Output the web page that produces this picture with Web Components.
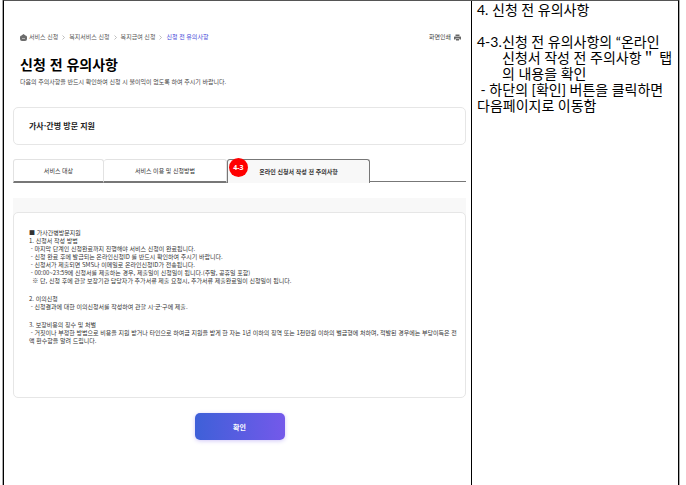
<!DOCTYPE html>
<html lang="ko">
<head>
<meta charset="utf-8">
<meta name="viewport" content="width=device-width, initial-scale=1">
<title>신청 전 유의사항</title>
<style>
  body { margin: 0; background: #fff; color: #111; font-family: "Noto Sans CJK KR", sans-serif; }
</style>
</head>
<body>
<guide-sheet>
  <service-page>
    <page-header heading="신청 전 유의사항" note="다음의 주의사항을 반드시 확인하여 신청 시 불이익이 없도록 하여 주시기 바랍니다."></page-header>
    <service-card>가사·간병 방문 지원</service-card>
    <service-tabs></service-tabs>
    <notice-panel>
      <notice-group>
        <p>■ 가사간병방문지원</p>
        <p>1. 신청서 작성 방법</p>
        <p>&nbsp;- 마지막 단계인 신청완료까지 진행해야 서비스 신청이 완료됩니다.</p>
        <p>&nbsp;- 신청 완료 후에 발급되는 온라인신청ID 를 반드시 확인하여 주시기 바랍니다.</p>
        <p>&nbsp;- 신청서가 제출되면 SMS나 이메일로 온라인신청ID가 전송됩니다.</p>
        <p>&nbsp;- 00:00~23:59에 신청서를 제출하는 경우, 제출일이 신청일이 됩니다.(주말, 공휴일 포함)</p>
        <p>&nbsp;&nbsp;※ 단, 신청 후에 관할 보장기관 담당자가 추가서류 제출 요청시, 추가서류 제출완료일이 신청일이 됩니다.</p>
      </notice-group>
      <notice-group>
        <p>2. 이의신청</p>
        <p>&nbsp;- 신청결과에 대한 이의신청서를 작성하여 관할 시·군·구에 제출.</p>
      </notice-group>
      <notice-group>
        <p>3. 보장비용의 징수 및 처벌</p>
        <p>&nbsp;- 거짓이나 부정한 방법으로 비용을 지원 받거나 타인으로 하여금 지원을 받게 한 자는 1년 이하의 징역 또는 1천만원 이하의 벌금형에 처하며, 적발된 경우에는 부당이득은 전액 환수함을 알려 드립니다.</p>
      </notice-group>
    </notice-panel>
    <confirm-button>확인</confirm-button>
  </service-page>
  <guide-notes slot="notes"></guide-notes>
</guide-sheet>

<script>
const define = (name, html, setup) => customElements.define(name, class extends HTMLElement {
  constructor() {
    super();
    this.attachShadow({ mode: "open" }).innerHTML = html;
  }
  connectedCallback() { if (setup) setup(this, this.shadowRoot); }
});

define("guide-sheet", `
  <style>
    :host { display: grid; grid-template-columns: minmax(0, 468fr) minmax(0, 206fr); box-sizing: border-box;
      min-height: 100vh; margin: 0 7px 0 3px; border: 1px solid #000; border-top-color: #555; border-bottom: 0;
      box-shadow: -1px 0 #aaa, 1px 0 #aaa; }
    main { border-right: 1px solid #000; }
  </style>
  <main><slot></slot></main>
  <aside><slot name="notes"></slot></aside>`);

define("service-page", `
  <style>:host { display: block; padding: 32px 5px 40px 9px; }</style>
  <slot></slot>`);

define("page-header", `
  <style>
    :host { display: block; padding: 0 5px 0 7px; }
    .top { display: flex; justify-content: space-between; align-items: center; height: 8px; font-size: 6px; line-height: 8px; }
    nav, .print { display: flex; align-items: center; }
    nav { gap: 4px; }
    a { color: #555; text-decoration: none; white-space: nowrap; }
    a.home { display: flex; align-items: center; gap: 2px; }
    a.now { color: #3f45d8; }
    .print { gap: 3px; border: 0; padding: 0; background: none; color: #444; font: inherit; }
    h1 { margin: 12px 0 0; font-size: 14px; line-height: 22px; font-weight: 700; color: #000; }
    p { margin: 3px 0 0; font-size: 6px; line-height: 8px; color: #444; }
    svg { display: block; }
  </style>
  <div class="top">
    <nav aria-label="현재 위치">
      <a class="home" href="#"><svg width="7" height="7" viewBox="0 0 14 14" aria-hidden="true"><path d="M7 0 11 3a3 3 0 0 1 3 3v4a4 4 0 0 1-4 4H4a4 4 0 0 1-4-4V6a3 3 0 0 1 3-3z" fill="#6c6c6c"/><path d="M4 9h6" stroke="#ccc" stroke-width="1.5"/></svg>서비스 신청</a>
      <svg width="3" height="5" viewBox="0 0 6 10" aria-hidden="true"><path d="m1 1 4 4-4 4" fill="none" stroke="#aaa" stroke-width="1.5"/></svg>
      <a href="#">복지서비스 신청</a>
      <svg width="3" height="5" viewBox="0 0 6 10" aria-hidden="true"><path d="m1 1 4 4-4 4" fill="none" stroke="#aaa" stroke-width="1.5"/></svg>
      <a href="#">복지급여 신청</a>
      <svg width="3" height="5" viewBox="0 0 6 10" aria-hidden="true"><path d="m1 1 4 4-4 4" fill="none" stroke="#aaa" stroke-width="1.5"/></svg>
      <a class="now" href="#" aria-current="page">신청 전 유의사항</a>
    </nav>
    <button class="print" type="button">화면인쇄<svg width="7" height="7" viewBox="0 0 14 14" aria-hidden="true"><path d="M3 1h8v3H3zM1 5h12a1 1 0 0 1 1 1v5h-3V9H3v2H0V6a1 1 0 0 1 1-1zM4 10h6v3H4z" fill="#666"/></svg></button>
  </div>
  <h1></h1>
  <p></p>`, (el, root) => {
    root.querySelector("h1").textContent = el.getAttribute("heading");
    root.querySelector("p").textContent = el.getAttribute("note");
  });

define("service-card", `
  <style>
    :host { display: block; margin-top: 21px; border: 1px solid #e6e6e6; border-radius: 5px; padding: 11px 15px; }
    h2 { margin: 0; font-size: 8px; line-height: 14px; font-weight: 700; color: #222; }
  </style>
  <h2><slot></slot></h2>`);

define("step-badge", `
  <style>
    :host { position: absolute; left: 1px; top: -2px; display: grid; place-items: center; width: 19px; height: 19px;
      border-radius: 50%; background: #f00; color: #fff; font: 700 7px/8px "Open Sans", sans-serif; }
  </style>
  <slot></slot>`);

define("service-tabs", `
  <style>
    :host { display: grid; grid-template-columns: 91fr 123fr 143fr 96fr; margin: 14px 0 15px; height: 24px; }
    button, .rest { box-sizing: border-box; border: 1px solid #e2e2e2; border-bottom: 2px solid #777; background: #fff; }
    button { position: relative; min-width: 0; padding: 0; border-radius: 3px 3px 0 0; color: #333;
      font: 400 6px/8px "Noto Sans CJK KR", sans-serif; }
    button + button { border-left: 0; }
    button[aria-selected="true"] { border: 1px solid #777; border-bottom: 0; background: #f8f8f8; font-weight: 700; }
    .rest { border: 0; border-bottom: 1px solid #777; margin-bottom: 1px; }
  </style>
  <button type="button" role="tab" aria-selected="false">서비스 대상</button>
  <button type="button" role="tab" aria-selected="false">서비스 이용 및 신청방법</button>
  <button type="button" role="tab" aria-selected="true">온라인 신청서 작성 전 주의사항<step-badge>4-3</step-badge></button>
  <div class="rest"></div>`, (el) => el.setAttribute("role", "tablist"));

define("notice-panel", `
  <style>
    :host { display: block; padding-top: 14px; background: linear-gradient(#f8f8f8 22px, #fff 22px); }
    section { display: grid; align-content: start; gap: 10px; box-sizing: border-box; min-height: 186px; padding: 16px 6px 40px 15px;
      border: 1px solid #e6e6e6; border-radius: 5px; background: #fff; }
  </style>
  <section><slot></slot></section>`);

define("notice-group", `
  <style>
    :host { display: block; font-size: 6px; line-height: 8px; color: #333; word-break: break-all; }
    ::slotted(p) { margin: 0; }
  </style>
  <slot></slot>`);

define("confirm-button", `
  <style>
    :host { display: flex; justify-content: center; margin-top: 15px; }
    button { width: 90px; height: 27px; padding: 0; border: 0; border-radius: 5px; color: #fff;
      background: linear-gradient(90deg, #3e60d8, #7459ea); box-shadow: 0 1px 4px #7459ea55;
      font: 700 7px/10px "Noto Sans CJK KR", sans-serif; }
  </style>
  <button type="button"><slot></slot></button>`);

define("guide-notes", `
  <style>
    :host { display: block; padding: 1px 2px 0 5px; font: 14px/16px Lato, "Noto Sans CJK KR", sans-serif; color: #000; }
    p { margin: 0; }
    .step { display: grid; grid-template-columns: 25px minmax(0, 1fr); margin-top: 16px; }
    .step p { white-space: nowrap; }
  </style>
  <p>4. 신청 전 유의사항</p>
  <div class="step"><span>4-3.</span><div><p>신청 전 유의사항의 “온라인</p><p>신청서 작성 전 주의사항＂ 탭</p><p>의 내용을 확인</p></div></div>
  <p>&nbsp;- 하단의 [확인] 버튼을 클릭하면<br>다음페이지로 이동함</p>`);
</script>
</body>
</html>
